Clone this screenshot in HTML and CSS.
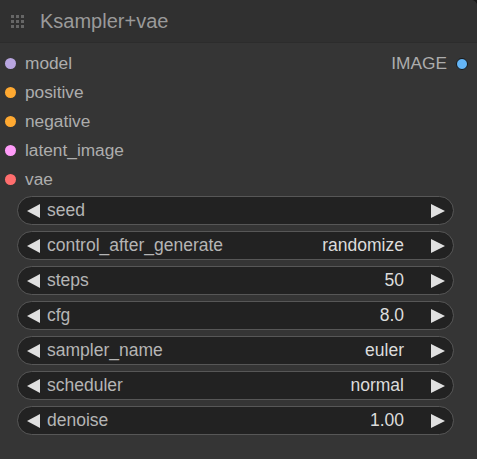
FILE: index.html
```html
<!DOCTYPE html>
<html lang="en">

<head>
  <meta charset="UTF-8">
  <title>Ksampler+vae</title>
  <link rel="stylesheet" href="styles.css">
</head>

<body>
  <div class="node">
    <div class="node-title">
      <svg class="grip" width="13" height="13" viewBox="0 0 13 13">
        <g fill="#666">
          <rect x="0" y="0" width="3" height="3"/><rect x="5" y="0" width="3" height="3"/><rect x="10" y="0" width="3" height="3"/>
          <rect x="0" y="5" width="3" height="3"/><rect x="5" y="5" width="3" height="3"/><rect x="10" y="5" width="3" height="3"/>
          <rect x="0" y="10" width="3" height="3"/><rect x="5" y="10" width="3" height="3"/><rect x="10" y="10" width="3" height="3"/>
        </g>
      </svg>
      <span>Ksampler+vae</span>
    </div>

    <div class="slots">
      <div class="inputs">
        <div class="slot"><i class="dot model"></i>model</div>
        <div class="slot"><i class="dot cond"></i>positive</div>
        <div class="slot"><i class="dot cond"></i>negative</div>
        <div class="slot"><i class="dot latent"></i>latent_image</div>
        <div class="slot"><i class="dot vae"></i>vae</div>
      </div>
      <div class="outputs">
        <div class="slot">IMAGE<i class="dot image"></i></div>
      </div>
    </div>

    <div class="widgets">
      <div class="widget"><span class="arrow left"></span><span class="name">seed</span><span class="value"></span><span class="arrow right"></span></div>
      <div class="widget"><span class="arrow left"></span><span class="name">control_after_generate</span><span class="value">randomize</span><span class="arrow right"></span></div>
      <div class="widget"><span class="arrow left"></span><span class="name">steps</span><span class="value">50</span><span class="arrow right"></span></div>
      <div class="widget"><span class="arrow left"></span><span class="name">cfg</span><span class="value">8.0</span><span class="arrow right"></span></div>
      <div class="widget"><span class="arrow left"></span><span class="name">sampler_name</span><span class="value">euler</span><span class="arrow right"></span></div>
      <div class="widget"><span class="arrow left"></span><span class="name">scheduler</span><span class="value">normal</span><span class="arrow right"></span></div>
      <div class="widget"><span class="arrow left"></span><span class="name">denoise</span><span class="value">1.00</span><span class="arrow right"></span></div>
    </div>
  </div>
</body>

</html>
```

FILE: styles.css
```css
* {
  box-sizing: border-box;
  margin: 0;
  padding: 0;
  font-family: 'Liberation Sans', Arial, sans-serif;
}

body {
  width: 477px;
  height: 459px;
  background: #1b1b1b;
  overflow: hidden;
}

.node {
  width: 477px;
  height: 459px;
  background: #353535;
  border-top-right-radius: 6px;
  overflow: hidden;
}

.node-title {
  height: 43px;
  background: #303030;
  display: flex;
  align-items: center;
  padding-left: 11px;
  border-bottom: 1px solid #2c2c2c;
}

.node-title .grip {
  margin-right: 16px;
}

.node-title span {
  font-size: 20px;
  color: #9a9a9a;
}

.slots {
  display: flex;
  justify-content: space-between;
  padding-top: 6px;
}

.slot {
  height: 29px;
  display: flex;
  align-items: center;
  font-size: 17.3px;
  color: #adadad;
}

.inputs .slot {
  padding-left: 5px;
}

.outputs .slot {
  padding-right: 9px;
}

.dot {
  display: inline-block;
  width: 11px;
  height: 11px;
  border-radius: 50%;
  margin-right: 9px;
}

.dot.model { background: #b9a6e0; }
.dot.cond { background: #ffa931; }
.dot.latent { background: #ff9cf9; }
.dot.vae { background: #ff6e6e; }

.dot.image {
  background: #64b5f6;
  border: 1.5px solid #151515;
  width: 12px;
  height: 12px;
  margin-right: 0;
  margin-left: 9px;
}

.widgets {
  display: flex;
  flex-direction: column;
  gap: 6px;
  padding: 2px 23px 0 17px;
}

.widget {
  height: 29px;
  display: flex;
  align-items: center;
  background: #222;
  border: 1.5px solid #575757;
  border-radius: 15px;
  padding: 0 8px 0 9px;
  font-size: 17.5px;
}

.widget .name {
  color: #b5b5b5;
  flex: 1;
  margin-left: 7px;
}

.widget .value {
  color: #dcdcdc;
  margin-right: 27px;
}

.arrow {
  width: 0;
  height: 0;
  border-top: 7px solid transparent;
  border-bottom: 7px solid transparent;
}

.arrow.left {
  border-right: 13px solid #e0e0e0;
}

.arrow.right {
  border-left: 14px solid #e0e0e0;
}
```
